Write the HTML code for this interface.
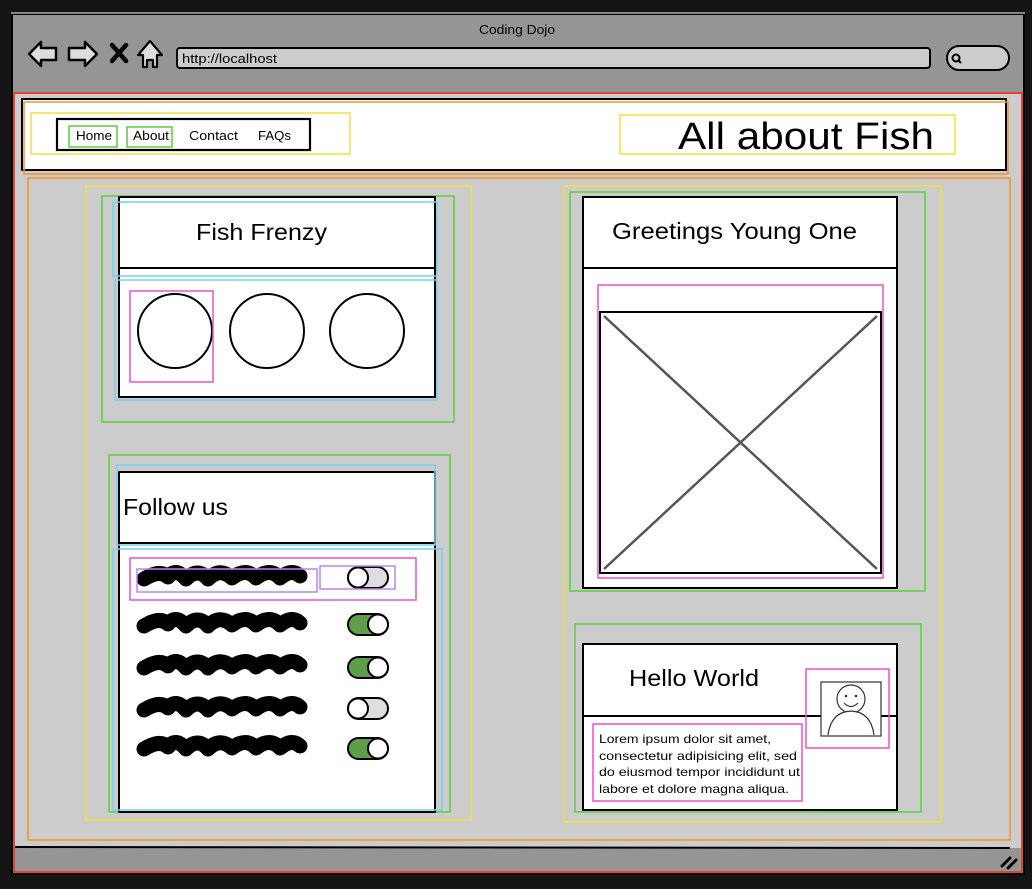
<!DOCTYPE html>
<html><head><meta charset="utf-8"><style>
html,body{margin:0;padding:0;background:#141414;width:1032px;height:889px;overflow:hidden}
svg{display:block}
text{font-family:"Liberation Sans","DejaVu Sans",sans-serif;fill:#000}
</style></head><body>
<svg width="1032" height="889" viewBox="0 0 1032 889" xmlns="http://www.w3.org/2000/svg">
<rect x="0" y="0" width="1032" height="889" fill="#141414"/>
<rect x="12" y="14" width="1012" height="860" fill="#959595" stroke="#000" stroke-width="2"/>
<line x1="11" y1="13" x2="1025" y2="13" stroke="#fff" stroke-width="1"/>
<rect x="14" y="93" width="1008" height="755" fill="#cccccc"/>
<line x1="14" y1="847" x2="1010" y2="848" stroke="#000" stroke-width="2"/>
<text x="517" y="34" font-size="13" text-anchor="middle" textLength="76" lengthAdjust="spacingAndGlyphs">Coding Dojo</text>
<path d="M29 54 L41 42 L41 48 L56 48 L56 60 L41 60 L41 66 Z" fill="#ddd" stroke="#000" stroke-width="2.5" stroke-linejoin="round"/>
<path d="M97 54 L85 42 L85 48 L69 48 L69 60 L85 60 L85 66 Z" fill="#ddd" stroke="#000" stroke-width="2.5" stroke-linejoin="round"/>
<path d="M112 45 L126 61 M126 45 L112 61" stroke="#000" stroke-width="4.5" stroke-linecap="round"/>
<path d="M138 55 L150 41 L162 55 L157 55 L157 67 L153 67 L153 60 L147 60 L147 67 L143 67 L143 55 Z" fill="#ddd" stroke="#000" stroke-width="2.2" stroke-linejoin="round"/>
<rect x="177" y="48" width="753" height="20" rx="3" fill="#cccccc" stroke="#000" stroke-width="2"/>
<text x="182" y="63" font-size="13" textLength="95" lengthAdjust="spacingAndGlyphs">http://localhost</text>
<rect x="947" y="46" width="62" height="24" rx="12" fill="#cccccc" stroke="#000" stroke-width="2"/>
<circle cx="956" cy="58" r="3.5" fill="none" stroke="#000" stroke-width="2"/>
<line x1="958" y1="60" x2="961" y2="63" stroke="#000" stroke-width="2"/>
<rect x="14" y="93" width="1008" height="779" fill="none" stroke="#e8432e" stroke-width="2"/>
<path d="M1002 866 L1010 858 M1008 868 L1016 860" stroke="#000" stroke-width="3" stroke-linecap="round"/>
<rect x="22" y="99" width="984" height="71" fill="#fff" stroke="#000" stroke-width="2"/>
<rect x="24" y="102" width="984" height="72" fill="none" stroke="#f0952a" stroke-width="1.5"/>
<rect x="31" y="113" width="319" height="41" fill="none" stroke="#f2e03e" stroke-width="1.5"/>
<rect x="57" y="119" width="253" height="31" fill="#fff" stroke="#000" stroke-width="2.2"/>
<rect x="69" y="126" width="48" height="21" fill="none" stroke="#5ccf3a" stroke-width="1.5"/>
<rect x="127" y="127" width="45" height="20" fill="none" stroke="#5ccf3a" stroke-width="1.5"/>
<text x="76" y="140" font-size="13" textLength="36" lengthAdjust="spacingAndGlyphs">Home</text>
<text x="133" y="140" font-size="13" textLength="36" lengthAdjust="spacingAndGlyphs">About</text>
<text x="189" y="140" font-size="13" textLength="49" lengthAdjust="spacingAndGlyphs">Contact</text>
<text x="258" y="140" font-size="13" textLength="33" lengthAdjust="spacingAndGlyphs">FAQs</text>
<rect x="620" y="115" width="335" height="39" fill="none" stroke="#f2e03e" stroke-width="1.5"/>
<text x="678" y="149" font-size="38" textLength="256" lengthAdjust="spacingAndGlyphs">All about Fish</text>
<rect x="28" y="178" width="982" height="662" fill="none" stroke="#f0952a" stroke-width="1.5"/>
<rect x="86" y="186" width="385" height="634" fill="none" stroke="#f2e03e" stroke-width="1.5"/>
<rect x="564" y="186" width="377" height="636" fill="none" stroke="#f2e03e" stroke-width="1.5"/>
<rect x="102" y="196" width="352" height="226" fill="none" stroke="#5ccf3a" stroke-width="1.5"/>
<rect x="119" y="197" width="316" height="200" fill="#fff" stroke="#000" stroke-width="2"/>
<line x1="119" y1="268" x2="435" y2="268" stroke="#000" stroke-width="2"/>
<rect x="113" y="202" width="324" height="74" fill="none" stroke="#74d3ea" stroke-width="1.5"/>
<rect x="115" y="280" width="322" height="120" fill="none" stroke="#74d3ea" stroke-width="1.5"/>
<text x="196" y="240" font-size="23" textLength="131" lengthAdjust="spacingAndGlyphs">Fish Frenzy</text>
<circle cx="175" cy="331" r="37" fill="#fff" stroke="#000" stroke-width="2"/>
<circle cx="267" cy="331" r="37" fill="#fff" stroke="#000" stroke-width="2"/>
<circle cx="367" cy="331" r="37" fill="#fff" stroke="#000" stroke-width="2"/>
<rect x="130" y="291" width="83" height="91" fill="none" stroke="#ec52c5" stroke-width="1.5"/>
<rect x="109" y="455" width="341" height="357" fill="none" stroke="#5ccf3a" stroke-width="1.5"/>
<rect x="119" y="472" width="316" height="340" fill="#fff" stroke="#000" stroke-width="2"/>
<line x1="119" y1="543" x2="435" y2="543" stroke="#000" stroke-width="2"/>
<rect x="117" y="465" width="318" height="80" fill="none" stroke="#74d3ea" stroke-width="1.5"/>
<rect x="113" y="549" width="329" height="261" fill="none" stroke="#74d3ea" stroke-width="1.5"/>
<text x="123" y="515" font-size="23" textLength="105" lengthAdjust="spacingAndGlyphs">Follow us</text>
<defs><path id="sc" d="M144 6 Q160 -4 168 4 Q176 -6 186 6 Q198 -6 208 6 Q220 -6 232 5 Q246 -6 256 5 Q270 -6 280 5 Q292 -5 300 3"/></defs>
<g stroke="#000" stroke-width="15" fill="none" stroke-linecap="round" stroke-linejoin="round">
<use href="#sc" y="573"/><use href="#sc" y="620"/><use href="#sc" y="662"/><use href="#sc" y="704"/><use href="#sc" y="743"/>
</g>
<rect x="348" y="567" width="40" height="21" rx="10.5" fill="#dedede" stroke="#000" stroke-width="2"/><circle cx="358" cy="577.5" r="10" fill="#fff" stroke="#000" stroke-width="2"/>
<rect x="348" y="614" width="40" height="21" rx="10.5" fill="#5f9e49" stroke="#000" stroke-width="2"/><circle cx="378" cy="624.5" r="10" fill="#fff" stroke="#000" stroke-width="2"/>
<rect x="348" y="657" width="40" height="21" rx="10.5" fill="#5f9e49" stroke="#000" stroke-width="2"/><circle cx="378" cy="667.5" r="10" fill="#fff" stroke="#000" stroke-width="2"/>
<rect x="348" y="698" width="40" height="21" rx="10.5" fill="#dedede" stroke="#000" stroke-width="2"/><circle cx="358" cy="708.5" r="10" fill="#fff" stroke="#000" stroke-width="2"/>
<rect x="348" y="738" width="40" height="21" rx="10.5" fill="#5f9e49" stroke="#000" stroke-width="2"/><circle cx="378" cy="748.5" r="10" fill="#fff" stroke="#000" stroke-width="2"/>
<rect x="130" y="558" width="286" height="42" fill="none" stroke="#ec52c5" stroke-width="1.5"/>
<rect x="137" y="569" width="180" height="23" fill="none" stroke="#c084f0" stroke-width="1.5"/>
<rect x="320" y="566" width="75" height="23" fill="none" stroke="#c084f0" stroke-width="1.5"/>
<rect x="570" y="192" width="355" height="399" fill="none" stroke="#5ccf3a" stroke-width="1.5"/>
<rect x="583" y="197" width="314" height="391" fill="#fff" stroke="#000" stroke-width="2"/>
<line x1="583" y1="268" x2="897" y2="268" stroke="#000" stroke-width="2"/>
<text x="612" y="239" font-size="23" textLength="245" lengthAdjust="spacingAndGlyphs">Greetings Young One</text>
<rect x="598" y="285" width="285" height="293" fill="none" stroke="#ec52c5" stroke-width="1.5"/>
<rect x="600" y="312" width="281" height="261" fill="#fff" stroke="#000" stroke-width="2"/>
<path d="M604 316 L877 569 M877 316 L604 569" stroke="#555" stroke-width="2.5"/>
<rect x="575" y="624" width="346" height="188" fill="none" stroke="#5ccf3a" stroke-width="1.5"/>
<rect x="583" y="644" width="314" height="166" fill="#fff" stroke="#000" stroke-width="2"/>
<line x1="583" y1="716" x2="897" y2="716" stroke="#000" stroke-width="2"/>
<text x="629" y="686" font-size="23" textLength="130" lengthAdjust="spacingAndGlyphs">Hello World</text>
<rect x="821" y="682" width="60" height="54" fill="#fff" stroke="#333" stroke-width="1.2"/>
<circle cx="851" cy="699" r="14" fill="#fff" stroke="#333" stroke-width="1.2"/>
<circle cx="846" cy="696" r="1.3" fill="#333"/><circle cx="856" cy="696" r="1.3" fill="#333"/>
<path d="M844 703 Q851 710 858 703" fill="none" stroke="#333" stroke-width="1.2"/>
<path d="M828 735 Q831 712 851 711 Q871 712 874 735" fill="#fff" stroke="#333" stroke-width="1.2"/>
<rect x="806" y="669" width="83" height="79" fill="none" stroke="#ec52c5" stroke-width="1.5"/>
<rect x="593" y="724" width="209" height="77" fill="none" stroke="#ec52c5" stroke-width="1.5"/>
<g font-size="12"><text x="599" y="743" textLength="172" lengthAdjust="spacingAndGlyphs">Lorem ipsum dolor sit amet,</text>
<text x="599" y="760" textLength="198" lengthAdjust="spacingAndGlyphs">consectetur adipisicing elit, sed</text>
<text x="599" y="776" textLength="201" lengthAdjust="spacingAndGlyphs">do eiusmod tempor incididunt ut</text>
<text x="599" y="793" textLength="190" lengthAdjust="spacingAndGlyphs">labore et dolore magna aliqua.</text></g>
</svg>
</body></html>
